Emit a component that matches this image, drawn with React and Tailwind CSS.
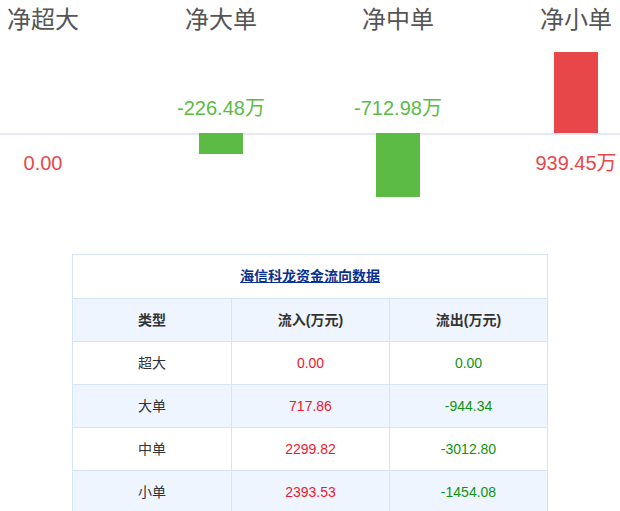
const cats = [
  { name: "净超大", cx: 43, bar: null, val: "0.00", up: true },
  { name: "净大单", cx: 221, bar: { top: 133, h: 21 }, val: "-226.48万", up: false },
  { name: "净中单", cx: 398, bar: { top: 133, h: 64 }, val: "-712.98万", up: false },
  { name: "净小单", cx: 576, bar: { top: 52, h: 81 }, val: "939.45万", up: true },
];

const rows = [
  ["超大", "0.00", "0.00"],
  ["大单", "717.86", "-944.34"],
  ["中单", "2299.82", "-3012.80"],
  ["小单", "2393.53", "-1454.08"],
];

export default function App() {
  return (
    <div className="w-[620px] h-[511px] bg-white overflow-hidden" style={{ fontFamily: "'Liberation Sans', 'Noto Sans CJK SC', sans-serif" }}>
      {/* chart */}
      <div className="relative h-[254px]">
        <div className="absolute left-0 right-0 top-[133px] h-[2px] bg-[#e6e9ef]" />
        {cats.map((c) => (
          <div key={c.name}>
            <div className="absolute top-[4px] w-[120px] -ml-[60px] text-center text-[24px] leading-[32px] text-[#555]" style={{ left: c.cx }}>
              {c.name}
            </div>
            {c.bar && (
              <div
                className={"absolute w-[44px] -ml-[22px] " + (c.up ? "bg-[#e8474a]" : "bg-[#5bbb45]")}
                style={{ left: c.cx, top: c.bar.top, height: c.bar.h }}
              />
            )}
            <div
              className={"absolute w-[140px] -ml-[70px] text-center text-[20px] leading-[24px] " + (c.up ? "text-[#e8474a]" : "text-[#5bbb45]")}
              style={{ left: c.cx, top: c.up ? 151 : 96 }}
            >
              {c.val}
            </div>
          </div>
        ))}
      </div>
      {/* table */}
      <div className="ml-[72px] w-[476px] border border-[#d5e3fb] text-[14px] text-[#333]">
        <div className="h-[43px] flex items-center justify-center font-bold text-[#0b3190] underline">
          海信科龙资金流向数据
        </div>
        <div className="grid grid-cols-[158px_158px_1fr] h-[43px] bg-[#eef5fe] border-t border-[#d5e3fb] font-bold">
          <div className="flex items-center justify-center">类型</div>
          <div className="flex items-center justify-center border-l border-[#d5e3fb]">流入(万元)</div>
          <div className="flex items-center justify-center border-l border-[#d5e3fb]">流出(万元)</div>
        </div>
        {rows.map((r, i) => (
          <div key={r[0]} className={"grid grid-cols-[158px_158px_1fr] h-[43px] border-t border-[#d5e3fb] " + (i % 2 ? "bg-[#eef5fe]" : "bg-white")}>
            <div className="flex items-center justify-center">{r[0]}</div>
            <div className="flex items-center justify-center border-l border-[#d5e3fb] text-[#f0182f]">{r[1]}</div>
            <div className="flex items-center justify-center border-l border-[#d5e3fb] text-[#12920e]">{r[2]}</div>
          </div>
        ))}
      </div>
    </div>
  );
}
